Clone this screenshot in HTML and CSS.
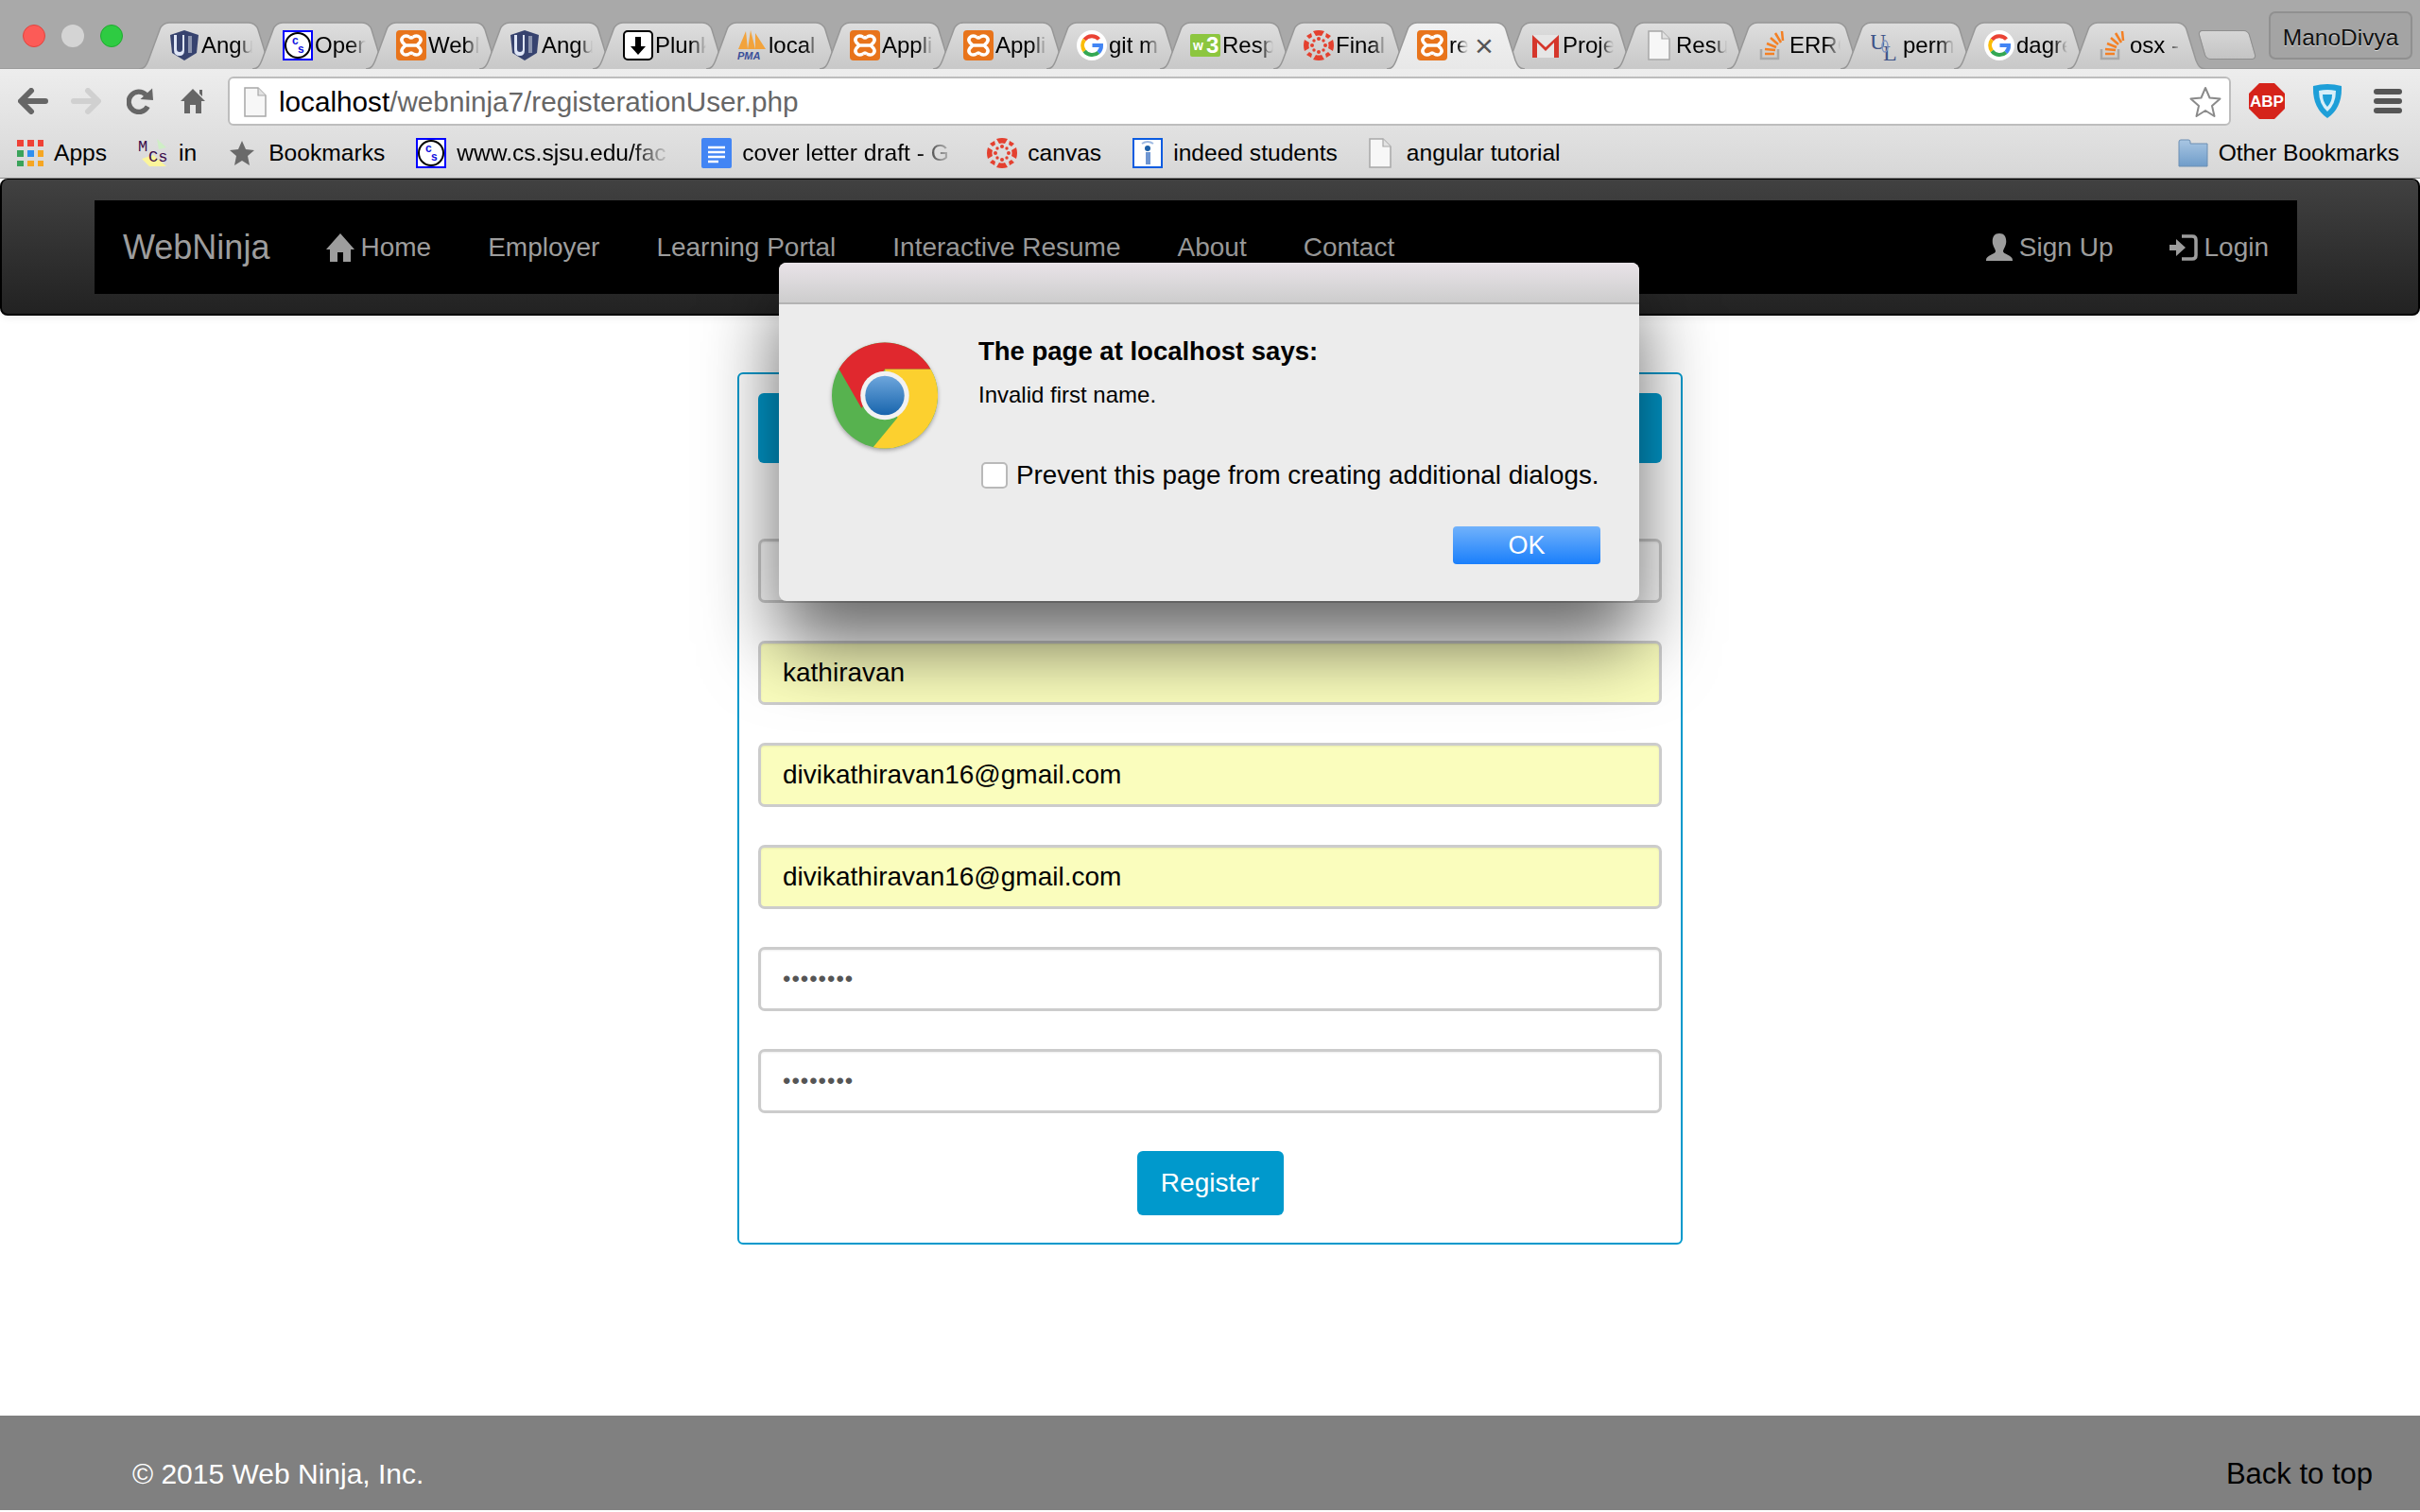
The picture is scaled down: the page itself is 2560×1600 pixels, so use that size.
FILE: index.html
```html
<!DOCTYPE html>
<html lang="en">

<head>
    <meta charset="UTF-8">
    <title>registerationUser.php</title>
    <link rel="stylesheet" href="styles.css">
</head>

<body>
    <!-- icon sprite -->
    <svg class="sprite" xmlns="http://www.w3.org/2000/svg">
        <defs>
            <linearGradient id="tabFill" x1="0" y1="0" x2="0" y2="1">
                <stop offset="0" stop-color="#dedede" />
                <stop offset="1" stop-color="#c8c8c8" />
            </linearGradient>
            <linearGradient id="tabActiveFill" x1="0" y1="0" x2="0" y2="1">
                <stop offset="0" stop-color="#f1f1f1" />
                <stop offset="1" stop-color="#e8e8e8" />
            </linearGradient>
            <linearGradient id="chromeBlue" x1="0" y1="0" x2="0" y2="1">
                <stop offset="0" stop-color="#6ea6dc" />
                <stop offset="1" stop-color="#1865ad" />
            </linearGradient>
            <linearGradient id="folderFill" x1="0" y1="0" x2="0" y2="1">
                <stop offset="0" stop-color="#a9c6e3" />
                <stop offset="1" stop-color="#6f9cc9" />
            </linearGradient>
        </defs>
        <symbol id="tab" viewBox="0 0 146 49" preserveAspectRatio="none">
            <path d="M0 49 C6 49 8 45 10 40 L22 8 Q25 1 32 1 H116 Q123 1 126 8 L136 40 C138 45 140 49 146 49" />
        </symbol>
        <symbol id="ui" viewBox="0 0 32 32">
            <path d="M16 0 L31 5 L29 24 L16 32 L3 24 L1 5 Z" fill="#37436f" />
            <path d="M5 5 h3 v15 q0 3 3 3 q3 0 3 -3 v-15 h2 v16 q0 6 -5 6 q-6 0 -6 -6 Z" fill="#dfe6f7" />
            <rect x="20" y="6" width="4" height="18" fill="#8a93ad" />
        </symbol>
        <symbol id="xampp" viewBox="0 0 32 32">
            <rect width="32" height="32" rx="4" fill="#e8741b" />
            <path d="M14 7 C8 4 4 9 7 13 L10 16 L7 19 C4 23 8 28 14 25 M18 7 C24 4 28 9 25 13 L22 16 L25 19 C28 23 24 28 18 25 M10 16 H22 M14 7 Q16 9 18 7 M14 25 Q16 23 18 25" fill="none" stroke="#fff" stroke-width="3.5" />
        </symbol>
        <symbol id="plunk" viewBox="0 0 32 32">
            <rect x="1" y="1" width="30" height="30" rx="4" fill="#fff" stroke="#000" stroke-width="2" />
            <path d="M13 7 h6 v10 h5 l-8 9 l-8 -9 h5 Z" fill="#000" />
        </symbol>
        <symbol id="google" viewBox="0 0 32 32">
            <circle cx="16" cy="16" r="16" fill="#fff" />
            <path d="M23.500 9.500 A10 10 0 0 0 8.200 10" fill="none" stroke="#ea4335" stroke-width="4" />
            <path d="M8.200 10 A10 10 0 0 0 8.200 22" fill="none" stroke="#fbbc05" stroke-width="4" />
            <path d="M8.200 22 A10 10 0 0 0 23 23.500" fill="none" stroke="#34a853" stroke-width="4" />
            <path d="M23 23.500 A10 10 0 0 0 26 16 H16.500" fill="none" stroke="#4285f4" stroke-width="4" />
        </symbol>
        <symbol id="canvas" viewBox="0 0 32 32">
            <g fill="#e4402f">
                <circle cx="16" cy="9" r="2" />
                <circle cx="16" cy="23" r="2" />
                <circle cx="9" cy="16" r="2" />
                <circle cx="23" cy="16" r="2" />
                <circle cx="11" cy="11" r="1.700" />
                <circle cx="21" cy="11" r="1.700" />
                <circle cx="11" cy="21" r="1.700" />
                <circle cx="21" cy="21" r="1.700" />
                <path d="M10 1 Q16 -1 22 1 L19 6 Q16 5 13 6 Z" />
                <path d="M10 31 Q16 33 22 31 L19 26 Q16 27 13 26 Z" />
                <path d="M1 10 Q-1 16 1 22 L6 19 Q5 16 6 13 Z" />
                <path d="M31 10 Q33 16 31 22 L26 19 Q27 16 26 13 Z" />
                <path d="M3 6 L8 3 L9 7 L6 9 Z M29 6 L24 3 L23 7 L26 9 Z M3 26 L8 29 L9 25 L6 23 Z M29 26 L24 29 L23 25 L26 23 Z" />
            </g>
        </symbol>
        <symbol id="gmail" viewBox="0 0 32 32">
            <path d="M3 5 H29 V29 H3 Z" fill="#e6e6e6" />
            <path d="M2 5 L16 18 L30 5 V29 H25 V13 L16 22 L7 13 V29 H2 Z" fill="#d5362b" />
        </symbol>
        <symbol id="page" viewBox="0 0 24 32">
            <path d="M1 1 H15 L23 9 V31 H1 Z" fill="#f7f7f7" stroke="#a8a8a8" stroke-width="1.500" />
            <path d="M15 1 V9 H23" fill="#e2e2e2" stroke="#a8a8a8" stroke-width="1.200" />
        </symbol>
        <symbol id="so" viewBox="0 0 32 32">
            <path d="M4 20 V30 H22 V20" fill="none" stroke="#a8a8a8" stroke-width="2.500" />
            <g stroke="#f48024" stroke-width="2.500">
                <path d="M8 25 H18" />
                <path d="M8 20 L19 21" />
                <path d="M10 14 L20 18" />
                <path d="M14 8 L22 15" />
                <path d="M19 3 L25 13" />
                <path d="M26 1 L27 11" />
            </g>
        </symbol>
        <symbol id="docs" viewBox="0 0 32 32">
            <rect width="32" height="32" rx="2" fill="#4285f4" />
            <path d="M7 10 H25 M7 15 H25 M7 20 H25 M7 25 H18" stroke="#fff" stroke-width="2.500" />
        </symbol>
        <symbol id="indeed" viewBox="0 0 32 32">
            <rect x="1" y="1" width="30" height="30" fill="#fff" stroke="#0a5be0" stroke-width="2" />
            <circle cx="16" cy="11" r="3" fill="#1c5fa8" />
            <rect x="14" y="15" width="5" height="13" fill="#6f96d2" />
            <path d="M10 6 Q16 2 22 6" fill="none" stroke="#9db8e2" stroke-width="2" />
        </symbol>
    </svg>

    <header class="tabstrip">
        <div class="lights">
            <span class="light light-red"></span>
            <span class="light light-grey"></span>
            <span class="light light-green"></span>
        </div>
        <div class="tabs">
            <div class="tab"><svg class="tab-shape"><use href="#tab" /></svg><svg class="fav"><use href="#ui" /></svg><span class="tab-title">Angu</span></div>
            <div class="tab"><svg class="tab-shape"><use href="#tab" /></svg><svg class="fav" viewBox="0 0 32 32"><rect x="1" y="1" width="30" height="30" fill="#fff" stroke="#00f" stroke-width="2" /><circle cx="16" cy="16" r="13" fill="none" stroke="#000" stroke-width="2" /><text x="10" y="15" class="svg-cs">c</text><text x="16" y="24" class="svg-cs">s</text></svg><span class="tab-title">Open</span></div>
            <div class="tab"><svg class="tab-shape"><use href="#tab" /></svg><svg class="fav"><use href="#xampp" /></svg><span class="tab-title">WebN</span></div>
            <div class="tab"><svg class="tab-shape"><use href="#tab" /></svg><svg class="fav"><use href="#ui" /></svg><span class="tab-title">Angu</span></div>
            <div class="tab"><svg class="tab-shape"><use href="#tab" /></svg><svg class="fav"><use href="#plunk" /></svg><span class="tab-title">Plunk</span></div>
            <div class="tab"><svg class="tab-shape"><use href="#tab" /></svg><svg class="fav" viewBox="0 0 32 32"><path d="M2 20 L10 1 L12 20 Z M12 20 L15 0 L20 20 Z M20 20 L20 3 L31 20 Z" fill="#f2a33c" /><text x="1" y="31" class="svg-pma">PMA</text></svg><span class="tab-title">local</span></div>
            <div class="tab"><svg class="tab-shape"><use href="#tab" /></svg><svg class="fav"><use href="#xampp" /></svg><span class="tab-title">Appli</span></div>
            <div class="tab"><svg class="tab-shape"><use href="#tab" /></svg><svg class="fav"><use href="#xampp" /></svg><span class="tab-title">Appli</span></div>
            <div class="tab"><svg class="tab-shape"><use href="#tab" /></svg><svg class="fav"><use href="#google" /></svg><span class="tab-title">git m</span></div>
            <div class="tab"><svg class="tab-shape"><use href="#tab" /></svg><svg class="fav" viewBox="0 0 32 32"><rect y="4" width="32" height="24" rx="2" fill="#8cc63f" /><text x="3" y="21" class="svg-w3">w</text><text x="17" y="24" class="svg-w3-big">3</text></svg><span class="tab-title">Resp</span></div>
            <div class="tab"><svg class="tab-shape"><use href="#tab" /></svg><svg class="fav"><use href="#canvas" /></svg><span class="tab-title">Final</span></div>
            <div class="tab tab-active"><svg class="tab-shape"><use href="#tab" /></svg><svg class="fav"><use href="#xampp" /></svg><span class="tab-title tab-title-short">re</span><span class="tab-close">×</span></div>
            <div class="tab"><svg class="tab-shape"><use href="#tab" /></svg><svg class="fav"><use href="#gmail" /></svg><span class="tab-title">Proje</span></div>
            <div class="tab"><svg class="tab-shape"><use href="#tab" /></svg><svg class="fav fav-page"><use href="#page" /></svg><span class="tab-title">Resu</span></div>
            <div class="tab"><svg class="tab-shape"><use href="#tab" /></svg><svg class="fav"><use href="#so" /></svg><span class="tab-title">ERRO</span></div>
            <div class="tab"><svg class="tab-shape"><use href="#tab" /></svg><svg class="fav" viewBox="0 0 32 32"><text x="-1" y="20" class="svg-ul">U</text><text x="13" y="32" class="svg-ul">L</text><ellipse cx="15" cy="17" rx="3" ry="6" fill="none" stroke="#7f94c0" stroke-width="1.500" /></svg><span class="tab-title">perm</span></div>
            <div class="tab"><svg class="tab-shape"><use href="#tab" /></svg><svg class="fav"><use href="#google" /></svg><span class="tab-title">dagre</span></div>
            <div class="tab"><svg class="tab-shape"><use href="#tab" /></svg><svg class="fav"><use href="#so" /></svg><span class="tab-title">osx -</span></div>
        </div>
        <div class="new-tab"></div>
        <div class="profile">ManoDivya</div>
    </header>

    <div class="browser-bars">
        <div class="toolbar">
            <svg class="tool tool-back" viewBox="0 0 32 28"><path d="M14 3 L3 14 L14 25 M4 14 H29" fill="none" stroke="#666" stroke-width="6" stroke-linecap="round" stroke-linejoin="round" /></svg>
            <svg class="tool tool-forward" viewBox="0 0 32 28"><path d="M18 3 L29 14 L18 25 M28 14 H3" fill="none" stroke="#d0d0d0" stroke-width="6" stroke-linecap="round" stroke-linejoin="round" /></svg>
            <svg class="tool tool-reload" viewBox="0 0 30 28"><path d="M23 20 A11 11 0 1 1 21 7" fill="none" stroke="#666" stroke-width="5.500" /><path d="M15 12 L29 13 L28 0 Z" fill="#666" /></svg>
            <svg class="tool tool-home" viewBox="0 0 26 28"><path d="M13 1 L26 14 L22 14 V27 H16 V18 H10 V27 H4 V14 L0 14 Z M20 2 H23 V9 L20 6 Z" fill="#666" /></svg>
            <div class="omnibox">
                <svg class="omni-page"><use href="#page" /></svg>
                <span class="url"><span class="url-host">localhost</span>/webninja7/registerationUser.php</span>
                <svg class="omni-star" viewBox="0 0 34 34"><path d="M17 2 L21.500 12.500 L32.500 13.500 L24 21 L26.500 32 L17 26 L7.500 32 L10 21 L1.500 13.500 L12.500 12.500 Z" fill="#fff" stroke="#8a8a8a" stroke-width="2" stroke-linejoin="round" /></svg>
            </div>
            <svg class="ext-abp" viewBox="0 0 38 38"><path d="M11 0 H27 L38 11 V27 L27 38 H11 L0 27 V11 Z" fill="#d5231a" /><text x="19" y="25" class="svg-abp">ABP</text></svg>
            <svg class="ext-shield" viewBox="0 0 34 38"><path d="M2 3 Q17 -1 32 3 Q33 26 17 37 Q1 26 2 3 Z" fill="#1e9fd8" /><path d="M8 8 Q17 6 26 8 Q26 22 17 30 Q8 22 8 8 Z" fill="#d8eef8" /><path d="M12 12 H22 Q22 20 17 25 Q12 20 12 12 Z" fill="#1e9fd8" /></svg>
            <div class="menu-btn"><span></span><span></span><span></span></div>
        </div>
        <nav class="bookmarks">
            <a class="bm"><svg class="bm-icon bm-icon-small" viewBox="0 0 28 28"><g fill="#ef4136"><rect width="7" height="7" /><rect x="11" width="7" height="7" /><rect x="22" width="6" height="7" /></g><rect y="11" width="7" height="7" fill="#3aa35a" /><rect x="11" y="11" width="7" height="7" fill="#2f8ff0" /><rect x="22" y="11" width="6" height="7" fill="#f5a623" /><rect y="22" width="7" height="6" fill="#3aa35a" /><rect x="11" y="22" width="7" height="6" fill="#f5a623" /><rect x="22" y="22" width="6" height="6" fill="#f5a623" /></svg>Apps</a>
            <a class="bm"><svg class="bm-icon" viewBox="0 0 32 32"><path d="M16 18 L30 30 H12 L4 22 Z" fill="#fbf59b" /><path d="M20 1 L30 10 L22 12 Z" fill="#cfeec6" /><text x="0" y="14" class="svg-mcs">M</text><text x="11" y="25" class="svg-mcs">Cs</text></svg>in</a>
            <a class="bm bm-star"><svg class="bm-icon bm-icon-small" viewBox="0 0 28 28"><path d="M14 1 L18 10 L27 11 L20 17 L22 27 L14 22 L6 27 L8 17 L1 11 L10 10 Z" fill="#6a6a6a" /></svg>Bookmarks</a>
            <a class="bm"><svg class="bm-icon" viewBox="0 0 32 32"><rect x="1" y="1" width="30" height="30" fill="#fff" stroke="#00f" stroke-width="2" /><circle cx="16" cy="16" r="13" fill="none" stroke="#000" stroke-width="2" /><text x="10" y="15" class="svg-cs">c</text><text x="16" y="24" class="svg-cs">s</text></svg><span class="bm-fade">www.cs.sjsu.edu/fac</span></a>
            <a class="bm"><svg class="bm-icon"><use href="#docs" /></svg><span class="bm-fade">cover letter draft - G</span></a>
            <a class="bm"><svg class="bm-icon"><use href="#canvas" /></svg>canvas</a>
            <a class="bm"><svg class="bm-icon"><use href="#indeed" /></svg>indeed students</a>
            <a class="bm"><svg class="bm-icon bm-icon-page"><use href="#page" /></svg>angular tutorial</a>
            <a class="bm bm-other"><svg class="bm-icon" viewBox="0 0 32 32"><path d="M1 4 Q1 2 3 2 H11 Q13 2 13 4 V6 H31 V30 H1 Z" fill="url(#folderFill)" stroke="#6d8fb3" /></svg>Other Bookmarks</a>
        </nav>
    </div>

    <div class="navbar">
        <div class="navbar-inner">
            <a class="brand">WebNinja</a>
            <a class="nav-link"><svg class="nav-icon" viewBox="0 0 30 30"><path d="M15 0 L30 17 H26 V30 H18 V20 H12 V30 H4 V17 H0 Z" fill="#9d9d9d" /></svg>Home</a>
            <a class="nav-link">Employer</a>
            <a class="nav-link">Learning Portal</a>
            <a class="nav-link">Interactive Resume</a>
            <a class="nav-link">About</a>
            <a class="nav-link">Contact</a>
            <div class="nav-right">
                <a class="nav-link"><svg class="nav-icon" viewBox="0 0 30 30"><path d="M15 0 C21 0 23 5 22 11 C21 15 19 17 19 19 C19 22 29 23 29 28 V29 H1 V28 C1 23 11 22 11 19 C11 17 9 15 8 11 C7 5 9 0 15 0 Z" fill="#9d9d9d" /></svg>Sign Up</a>
                <a class="nav-link"><svg class="nav-icon" viewBox="0 0 30 30"><path d="M0 12 H7 V6 L17 15 L7 24 V18 H0 Z" fill="#9d9d9d" /><path d="M13 3 H24 Q28 3 28 7 V23 Q28 27 24 27 H13" fill="none" stroke="#9d9d9d" stroke-width="3.500" /></svg>Login</a>
            </div>
        </div>
    </div>

    <main class="content">
        <form class="register-card">
            <div class="card-heading"></div>
            <input class="field" type="text">
            <input class="field field-autofill" type="text" value="kathiravan">
            <input class="field field-autofill" type="text" value="divikathiravan16@gmail.com">
            <input class="field field-autofill" type="text" value="divikathiravan16@gmail.com">
            <input class="field field-pass" type="password" value="password">
            <input class="field field-pass" type="password" value="password">
            <button class="btn-register" type="button">Register</button>
        </form>
    </main>

    <footer class="footer">
        <span class="copyright">© 2015 Web Ninja, Inc.</span>
        <a class="back-top">Back to top</a>
    </footer>

    <!-- js alert sheet -->
    <div class="alert-sheet">
        <div class="alert-title"></div>
        <div class="alert-body">
            <svg class="alert-logo" viewBox="0 0 100 100">
                <path d="M50 0 A50 50 0 0 1 50 100 A50 50 0 0 1 50 0 Z" fill="#57b24f" />
                <path d="M93.300 25 A50 50 0 0 1 39 98.800 L62 71 L50 25 Z" fill="#fcd02f" />
                <path d="M6.700 25 A50 50 0 0 1 93.300 25 H50 L28 62 Z" fill="#e0282e" />
                <circle cx="50" cy="50" r="23" fill="#f2f2f2" />
                <circle cx="50" cy="50" r="18.500" fill="url(#chromeBlue)" />
            </svg>
            <div class="alert-text">
                <h2 class="alert-heading">The page at localhost says:</h2>
                <p class="alert-message">Invalid first name.</p>
                <label class="alert-check"><span class="alert-box"></span>Prevent this page from creating additional dialogs.</label>
                <div class="alert-actions"><button class="alert-ok" type="button">OK</button></div>
            </div>
        </div>
    </div>
</body>

</html>
```

FILE: styles.css
```css
* {
    box-sizing: border-box;
}

html,
body {
    height: 100%;
}

body {
    margin: 0;
    width: 2560px;
    height: 1600px;
    display: flex;
    flex-direction: column;
    position: relative;
    overflow: hidden;
    background: #fff;
    font-family: "Liberation Sans", Arial, sans-serif;
    color: #000;
}

.sprite {
    position: absolute;
    width: 0;
    height: 0;
}

/* svg text inside favicons */
.svg-cs {
    font: bold 12px "Liberation Sans", sans-serif;
    fill: #1414e0;
}

.svg-pma {
    font: italic bold 11px "Liberation Sans", sans-serif;
    fill: #3a4f9a;
}

.svg-w3 {
    font: bold 14px "Liberation Sans", sans-serif;
    fill: #fff;
}

.svg-w3-big {
    font: bold 24px "Liberation Sans", sans-serif;
    fill: #fff;
}

.svg-ul {
    font: 24px "Liberation Serif", serif;
    fill: #3f5488;
}

.svg-mcs {
    font: 17px "Liberation Mono", monospace;
    fill: #3a0a4a;
}

.svg-abp {
    font: bold 17px "Liberation Sans", sans-serif;
    fill: #fff;
    text-anchor: middle;
}

/* tab strip */
.tabstrip {
    height: 72px;
    flex: none;
    display: flex;
    background: #a9a9a9;
    padding-left: 24px;
}

.lights {
    display: flex;
    gap: 17px;
    padding-top: 26px;
}

.light {
    width: 24px;
    height: 24px;
    border-radius: 50%;
}

.light-red {
    background: #fc5b57;
    border: 1px solid #e0443e;
}

.light-grey {
    background: #d4d4d4;
}

.light-green {
    background: #2ecb42;
    border: 1px solid #1fab2f;
}

.tabs {
    display: flex;
    margin-left: 17px;
}

.tab {
    position: relative;
    width: 146px;
    height: 50px;
    margin-top: 23px;
    margin-right: -26px;
    padding: 9px 0 0 32px;
    display: flex;
    align-items: flex-start;
    gap: 2px;
    font-size: 24px;
}

.tab-active {
    z-index: 2;
}

.tab-shape {
    position: absolute;
    left: 0;
    top: 0;
    width: 100%;
    height: 100%;
    fill: url(#tabFill);
    stroke: #979797;
    stroke-width: 1.5;
}

.tab-active .tab-shape {
    fill: url(#tabActiveFill);
}

.fav {
    position: relative;
    flex: none;
    width: 32px;
    height: 32px;
}

.fav-page {
    width: 24px;
    margin: 0 4px;
}

/* title fades out before the end of its box, like the real tab */
.tab-title {
    position: relative;
    width: 70px;
    height: 32px;
    line-height: 32px;
    white-space: nowrap;
    -webkit-mask-image: linear-gradient(to right, #000 39px, transparent 54px);
    mask-image: linear-gradient(to right, #000 39px, transparent 54px);
}

.tab-title-short {
    width: 24px;
    -webkit-mask-image: linear-gradient(to right, #000 9px, transparent 20px);
    mask-image: linear-gradient(to right, #000 9px, transparent 20px);
}

.tab-close {
    position: relative;
    margin-left: 1px;
    font-size: 34px;
    line-height: 32px;
    color: #555;
}

.new-tab {
    width: 54px;
    height: 31px;
    margin: 32px 0 0 22px;
    transform: skewX(16deg);
    background: linear-gradient(#d6d6d6, #c4c4c4);
    border: 1px solid #8e8e8e;
    border-radius: 5px;
}

.profile {
    width: 152px;
    height: 51px;
    margin: 12px 0 0 17px;
    text-align: center;
    line-height: 51px;
    font-size: 24.5px;
    background: #a4a4a4;
    border: 2px solid #909090;
    border-radius: 7px;
    color: #111;
    text-shadow: 0 1px 0 #ddd;
}

/* toolbar + bookmarks */
.browser-bars {
    flex: none;
    height: 117px;
    background: linear-gradient(#ededed, #d7d7d7);
    border-top: 1px solid #9c9c9c;
    border-bottom: 1px solid #8a8a8a;
}

.toolbar {
    height: 60px;
    padding: 8px 0 0 19px;
    display: flex;
    align-items: flex-start;
}

.tool {
    height: 28px;
    margin-top: 12px;
    flex: none;
}

.tool-back,
.tool-forward {
    width: 32px;
}

.tool-forward {
    margin-left: 24px;
}

.tool-reload {
    width: 29px;
    margin-left: 27px;
}

.tool-home {
    width: 26px;
    margin-left: 28px;
}

.omnibox {
    width: 2119px;
    height: 52px;
    margin-left: 24px;
    padding: 1px 8px 0 15px;
    display: flex;
    align-items: center;
    flex: none;
    background: #fff;
    border: 2px solid #bdbdbd;
    border-radius: 6px;
    font-size: 29.7px;
    color: #666;
}

.omni-page {
    width: 24px;
    height: 32px;
    flex: none;
}

.url {
    margin-left: 13px;
    padding-top: 1px;
    white-space: nowrap;
}

.url-host {
    color: #000;
}

.omni-star {
    width: 34px;
    height: 34px;
    margin-left: auto;
}

.ext-abp {
    width: 38px;
    height: 38px;
    margin: 7px 0 0 19px;
    flex: none;
}

.ext-shield {
    width: 34px;
    height: 38px;
    margin: 7px 0 0 28px;
    flex: none;
}

.menu-btn {
    margin: 13px 0 0 32px;
    display: flex;
    flex-direction: column;
    gap: 4px;
}

.menu-btn span {
    display: block;
    width: 30px;
    height: 6px;
    background: #555;
    border-radius: 3px;
}

.bookmarks {
    height: 55px;
    padding: 2px 22px 0 18px;
    display: flex;
    align-items: center;
    gap: 33px;
    font-size: 24.6px;
}

.bm {
    display: flex;
    align-items: center;
    gap: 11px;
    white-space: nowrap;
}

.bm-icon {
    width: 32px;
    height: 32px;
    flex: none;
}

.bm-icon-small {
    width: 28px;
    height: 28px;
}

.bm-star {
    gap: 14px;
    margin-left: 1px;
}

.bm-icon-page {
    width: 24px;
    margin-right: 5px;
}

.bm-fade {
    width: 226px;
    -webkit-mask-image: linear-gradient(to right, #000 82%, transparent);
    mask-image: linear-gradient(to right, #000 82%, transparent);
}

.bm-other {
    margin-left: auto;
}

/* page navbar */
.navbar {
    flex: none;
    height: 145px;
    padding: 22px 128px 21px 98px;
    background: linear-gradient(#414141, #222);
    border: 2px solid #000;
    border-top-width: 1px;
    border-radius: 8px;
    box-shadow: 0 2px 8px rgba(0, 0, 0, 0.08);
}

.navbar-inner {
    height: 100%;
    padding: 0 30px;
    display: flex;
    align-items: center;
    gap: 60px;
    background: #000;
    color: #9d9d9d;
    font-size: 28px;
}

.brand {
    font-size: 36px;
}

.nav-link {
    display: flex;
    align-items: center;
    gap: 6px;
    white-space: nowrap;
}

.nav-icon {
    width: 30px;
    height: 30px;
    flex: none;
}

.nav-right {
    margin-left: auto;
    display: flex;
    gap: 60px;
}

/* register form */
.content {
    flex: 1;
    padding-top: 60px;
}

.register-card {
    width: 1000px;
    height: 923px;
    margin: 0 auto;
    padding: 20px 20px 0;
    display: flex;
    flex-direction: column;
    align-items: center;
    gap: 40px;
    border: 2px solid #0099cc;
    border-radius: 6px;
}

.card-heading {
    width: 100%;
    height: 74px;
    margin-bottom: 40px;
    background: #0099cc;
    border-radius: 6px;
}

.field {
    width: 100%;
    height: 68px;
    padding: 0 23px;
    flex: none;
    background: #fff;
    border: 3px solid #ccc;
    border-radius: 7px;
    box-shadow: inset 0 1px 2px rgba(0, 0, 0, 0.075);
    font: 28px "Liberation Sans", sans-serif;
    color: #000;
}

.field-autofill {
    background: #fafdbd;
}

.field-pass {
    color: #555;
    font-size: 24px;
    letter-spacing: 1px;
}

.btn-register {
    width: 155px;
    height: 68px;
    flex: none;
    background: #0099cc;
    border: 0;
    border-radius: 6px;
    font: 28px "Liberation Sans", sans-serif;
    color: #fff;
}

/* footer */
.footer {
    flex: none;
    height: 100px;
    margin-bottom: 2px;
    padding: 44px 50px 0 140px;
    display: flex;
    justify-content: space-between;
    align-items: baseline;
    background: #808080;
    font-size: 30px;
}

.copyright {
    color: #fff;
}

.back-top {
    color: #000;
    font-size: 31px;
}

/* alert over the page */
.alert-sheet {
    position: absolute;
    left: 824px;
    top: 278px;
    width: 910px;
    height: 358px;
    background: #ececec;
    border-radius: 8px;
    box-shadow: 0 45px 80px rgba(0, 0, 0, 0.6);
}

.alert-title {
    height: 44px;
    background: linear-gradient(#e9e3e8, #cdcdcd);
    border-bottom: 2px solid #b3b3b3;
    border-radius: 8px 8px 0 0;
}

.alert-body {
    padding: 35px 41px 0 56px;
    display: flex;
    gap: 43px;
}

.alert-logo {
    width: 112px;
    height: 113px;
    margin-top: 5px;
    flex: none;
    filter: drop-shadow(0 2px 2px rgba(0, 0, 0, 0.3));
}

.alert-text {
    flex: 1;
}

.alert-heading {
    margin: 0;
    font-size: 27.5px;
    line-height: 30px;
}

.alert-message {
    margin: 18px 0 0;
    font-size: 24px;
    line-height: 26px;
}

.alert-check {
    margin-top: 57px;
    display: flex;
    align-items: center;
    gap: 9px;
    font-size: 27.8px;
    line-height: 30px;
    white-space: nowrap;
}

.alert-box {
    width: 28px;
    height: 28px;
    margin-left: 3px;
    background: #fff;
    border: 2px solid #b9b9b9;
    border-radius: 5px;
}

.alert-actions {
    margin-top: 39px;
    display: flex;
    justify-content: flex-end;
}

.alert-ok {
    width: 156px;
    height: 40px;
    background: linear-gradient(#71b2fb, #1a7ffb);
    border: 0;
    border-radius: 4px;
    font: 27px "Liberation Sans", sans-serif;
    color: #fff;
}
```
